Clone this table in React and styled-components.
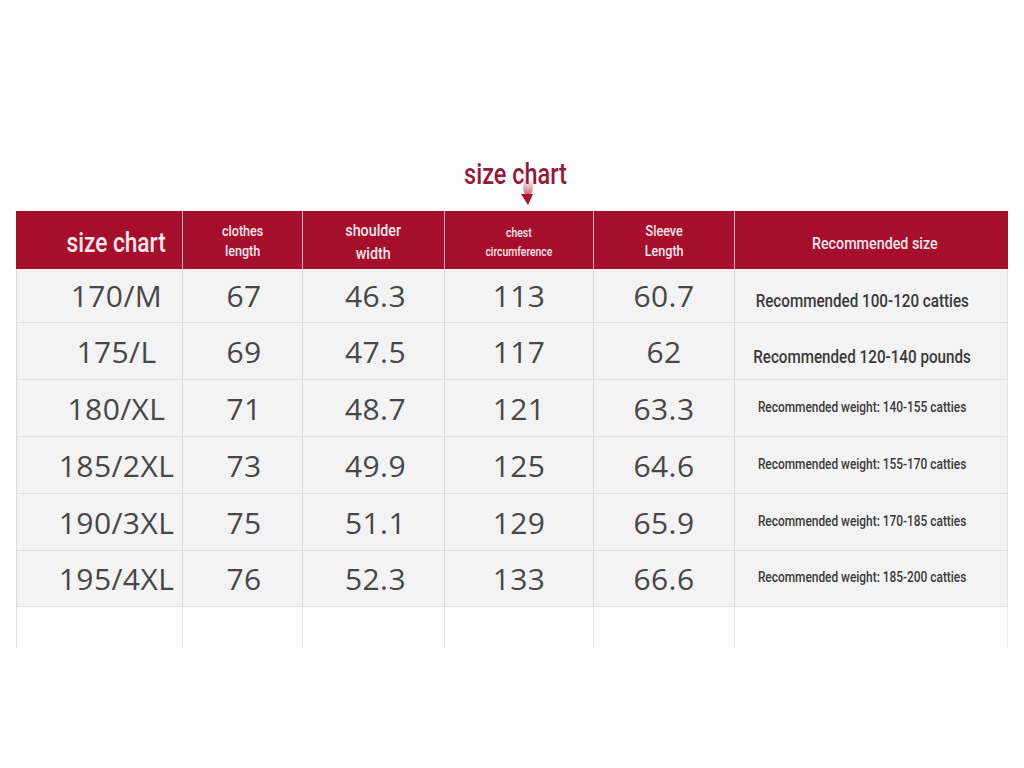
import React from "react";
import styled, { createGlobalStyle } from "styled-components";

const GlobalStyle = createGlobalStyle`
  html, body {
    margin: 0;
    padding: 0;
    background: #ffffff;
  }
  body {
    font-family: "Open Sans", "Noto Sans", sans-serif;
  }
`;

const COLS = "166px 120px 142px 149px 141px 274px";

const Page = styled.div`
  width: 1024px;
  height: 768px;
  padding: 0 16px;
  box-sizing: border-box;
  overflow: hidden;
`;

const Caption = styled.div`
  position: relative;
  height: 211px;
  display: flex;
  flex-direction: column;
  justify-content: flex-end;
  align-items: center;
`;

const Narrow = styled.span`
  display: inline-block;
  font-family: Roboto, "Liberation Sans", sans-serif;
  font-weight: 500;
  font-size: ${(p) => p.$size}px;
  line-height: ${(p) => p.$lh || 1.3};
  transform: scaleX(${(p) => p.$sx || 0.84});
  white-space: nowrap;
`;

const Title = styled(Narrow)`
  color: #97193a;
  margin: 0 0 19px 6px;
`;

const Pointer = styled.svg`
  position: absolute;
  left: 486px;
  bottom: 3px;
`;

const Table = styled.div`
  width: 992px;
`;

const Row = styled.div`
  display: grid;
  grid-template-columns: ${COLS};
  height: ${(p) => p.$h}px;
`;

const HeadCell = styled.div`
  background: #a60f2c;
  color: #fbe6e8;
  display: flex;
  align-items: center;
  justify-content: center;
  text-align: center;
  border-left: 1px solid rgba(255, 230, 235, 0.75);
  padding-left: ${(p) => p.$pl || 0}px;
  padding-top: ${(p) => p.$pt || 0}px;
  box-sizing: border-box;
  &:first-child {
    border-left: none;
  }
`;

const Cell = styled.div`
  background: #f3f3f3;
  color: #434343;
  display: flex;
  align-items: center;
  justify-content: center;
  border-left: 1px solid #dcdcdc;
  border-bottom: 1px solid #dedede;
  padding-left: ${(p) => p.$pl || 0}px;
  padding-right: ${(p) => p.$pr || 0}px;
  padding-top: ${(p) => p.$pt || 0}px;
  &:last-child {
    border-right: 1px solid #e2e2e2;
  }
`;

const Num = styled.span`
  font-family: "Open Sans", "Noto Sans", sans-serif;
  font-size: 30px;
  letter-spacing: 0.4px;
  color: #474747;
`;

const Note = styled(Narrow)`
  color: #3a3a3a;
`;

const EmptyCell = styled.div`
  background: #ffffff;
  border-left: 1px solid #e0e0e0;
  &:last-child {
    border-right: 1px solid #ececec;
  }
`;

const rows = [
  { size: "170/M", len: "67", sh: "46.3", ch: "113", sl: "60.7", rec: "Recommended 100-120 catties", big: true, h: 54 },
  { size: "175/L", len: "69", sh: "47.5", ch: "117", sl: "62", rec: "Recommended 120-140 pounds", big: true, h: 57 },
  { size: "180/XL", len: "71", sh: "48.7", ch: "121", sl: "63.3", rec: "Recommended weight: 140-155 catties", h: 57 },
  { size: "185/2XL", len: "73", sh: "49.9", ch: "125", sl: "64.6", rec: "Recommended weight: 155-170 catties", h: 57 },
  { size: "190/3XL", len: "75", sh: "51.1", ch: "129", sl: "65.9", rec: "Recommended weight: 170-185 catties", h: 57 },
  { size: "195/4XL", len: "76", sh: "52.3", ch: "133", sl: "66.6", rec: "Recommended weight: 185-200 catties", h: 56 },
];

const App = () => (
  <Page>
    <GlobalStyle />
    <Caption>
      <Title $size={29} $lh={1.2} $sx={0.81}>size chart</Title>
      <Pointer width="40" height="34" viewBox="0 0 40 34">
        <defs>
          <linearGradient id="smudge" x1="0" y1="0" x2="0" y2="1">
            <stop offset="0" stopColor="#c23b5a" stopOpacity="0" />
            <stop offset="1" stopColor="#b51435" stopOpacity="0.9" />
          </linearGradient>
        </defs>
        <ellipse cx="26" cy="13" rx="5" ry="9" fill="url(#smudge)" opacity="0.8" />
        <path d="M19 20 L31 20 L26 31 Z" fill="#b0102f" />
      </Pointer>
    </Caption>
    <Table>
      <Row $h={58}>
        <HeadCell $pl={34} $pt={7}>
          <Narrow $size={27}>size chart</Narrow>
        </HeadCell>
        <HeadCell $pt={2}>
          <Narrow $size={15} $lh={1.35}>clothes<br />length</Narrow>
        </HeadCell>
        <HeadCell $pt={4}>
          <Narrow $size={17} $lh={1.35}>shoulder<br />width</Narrow>
        </HeadCell>
        <HeadCell $pt={4}>
          <Narrow $size={13} $lh={1.5} $sx={0.8}>chest<br />circumference</Narrow>
        </HeadCell>
        <HeadCell $pt={2}>
          <Narrow $size={15} $lh={1.35}>Sleeve<br />Length</Narrow>
        </HeadCell>
        <HeadCell $pl={6} $pt={7}>
          <Narrow $size={17}>Recommended size</Narrow>
        </HeadCell>
      </Row>
      {rows.map((r) => (
        <Row key={r.size} $h={r.h}>
          <Cell $pl={34}><Num>{r.size}</Num></Cell>
          <Cell $pl={3}><Num>{r.len}</Num></Cell>
          <Cell $pl={4}><Num>{r.sh}</Num></Cell>
          <Cell><Num>{r.ch}</Num></Cell>
          <Cell><Num>{r.sl}</Num></Cell>
          <Cell $pr={18} $pt={r.big ? 12 : 0}>
            <Note $size={r.big ? 19 : 14.5} $sx={r.big ? 0.8 : 0.82}>{r.rec}</Note>
          </Cell>
        </Row>
      ))}
      <Row $h={41}>
        {[0, 1, 2, 3, 4, 5].map((i) => (
          <EmptyCell key={i} />
        ))}
      </Row>
    </Table>
  </Page>
);

export default App;
